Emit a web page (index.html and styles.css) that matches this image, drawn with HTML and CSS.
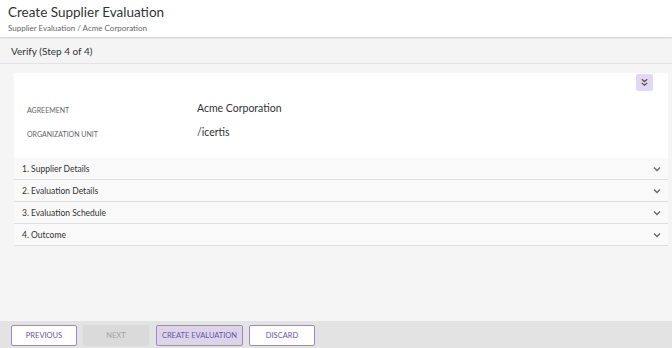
FILE: index.html
```html
<!DOCTYPE html>
<html lang="en">

<head>
  <meta charset="UTF-8">
  <meta name="viewport" content="width=device-width, initial-scale=1.0">
  <title>Create Supplier Evaluation</title>
  <link rel="stylesheet" href="styles.css">
</head>

<body>
  <div class="page">
    <!-- header -->
    <div class="header">
      <div class="title">Create Supplier Evaluation</div>
      <div class="crumbs">Supplier Evaluation / Acme Corporation</div>
    </div>
    <div class="step">Verify (Step 4 of 4)</div>

    <!-- main -->
    <div class="main">
      <div class="card">
        <div class="card-top">
          <button class="btn-expand" title="Expand all">
            <svg width="9" height="9" viewBox="0 0 10 10">
              <path d="M2 1.5 L5 4 L8 1.5 M2 5.5 L5 8 L8 5.5" fill="none" stroke="#555" stroke-width="1.4" />
            </svg>
          </button>
        </div>
        <div class="field">
          <span class="label">Agreement</span>
          <span class="value">Acme Corporation</span>
        </div>
        <div class="field">
          <span class="label">Organization Unit</span>
          <span class="value">/icertis</span>
        </div>
      </div>
      <div class="section">
        <span>1. Supplier Details</span>
        <svg class="chev" width="8" height="6" viewBox="0 0 8 6"><path d="M1 1.5 L4 4.5 L7 1.5" fill="none" stroke="#666" stroke-width="1.3" /></svg>
      </div>
      <div class="section">
        <span>2. Evaluation Details</span>
        <svg class="chev" width="8" height="6" viewBox="0 0 8 6"><path d="M1 1.5 L4 4.5 L7 1.5" fill="none" stroke="#666" stroke-width="1.3" /></svg>
      </div>
      <div class="section">
        <span>3. Evaluation Schedule</span>
        <svg class="chev" width="8" height="6" viewBox="0 0 8 6"><path d="M1 1.5 L4 4.5 L7 1.5" fill="none" stroke="#666" stroke-width="1.3" /></svg>
      </div>
      <div class="section">
        <span>4. Outcome</span>
        <svg class="chev" width="8" height="6" viewBox="0 0 8 6"><path d="M1 1.5 L4 4.5 L7 1.5" fill="none" stroke="#666" stroke-width="1.3" /></svg>
      </div>
    </div>

    <!-- footer -->
    <div class="footer">
      <button class="btn">Previous</button>
      <button class="btn btn-off" disabled>Next</button>
      <button class="btn btn-main">Create Evaluation</button>
      <button class="btn">Discard</button>
    </div>
  </div>
</body>

</html>
```

FILE: styles.css
```css
/* reset start */
html,
body {
  margin: 0;
  padding: 0;
}

body {
  font-family: "Lato", "Liberation Sans", sans-serif;
  color: #333;
}

button {
  font-family: inherit;
}

/* reset end */

.page {
  display: flex;
  flex-direction: column;
  width: 672px;
  height: 348px;
  background: #f5f5f5;
}

/* header start */
.header {
  height: 38px;
  padding: 4px 0 0 8px;
  box-sizing: border-box;
  background: #ffffff;
  border-bottom: 1px solid #d8d8d8;
  box-shadow: 0 1px 2px rgba(0, 0, 0, 0.08);
}

.header .title {
  font-size: 13.5px;
  line-height: 16px;
  color: #333;
}

.header .crumbs {
  margin-top: 3px;
  font-size: 8px;
  color: #666;
}

.step {
  height: 24px;
  line-height: 24px;
  padding-left: 11px;
  margin-top: 1px;
  font-size: 10px;
  color: #333;
  background: #f4f4f4;
  border-bottom: 1px solid #e4e4e4;
}

/* header end */

/* main start */
.main {
  flex: 1;
  padding: 9px 4px 0 14px;
}

.card {
  background: #ffffff;
  padding: 1px 15px 14px 13px;
}

.card-top {
  display: flex;
  justify-content: flex-end;
  height: 22px;
}

.btn-expand {
  width: 17px;
  height: 17px;
  padding: 0;
  border: none;
  border-radius: 2px;
  background: #e2d8f4;
  display: flex;
  align-items: center;
  justify-content: center;
}

.field {
  display: flex;
  align-items: center;
  height: 24px;
}

.field .label {
  width: 170px;
  font-size: 7px;
  text-transform: uppercase;
  color: #666;
  padding-top: 3px;
}

.field .value {
  font-size: 10.5px;
  color: #333;
}

.section {
  display: flex;
  justify-content: space-between;
  align-items: center;
  height: 21px;
  padding: 0 8px;
  background: #f9f9f9;
  border-bottom: 1px solid #dedede;
  font-size: 8.5px;
  color: #333;
}

.section .chev {
  margin-right: -1px;
}

/* main end */

/* footer start */
.footer {
  display: flex;
  gap: 6px;
  height: 27px;
  padding: 4px 11px 0;
  box-sizing: border-box;
  background: #e3e3e3;
}

.footer .btn {
  width: 66px;
  height: 21px;
  padding: 0;
  border: 1px solid #9d85cf;
  border-radius: 2px;
  background: #ffffff;
  color: #6b54a3;
  font-size: 7.5px;
  text-transform: uppercase;
}

.footer .btn-off {
  border-color: #dadada;
  background: #dadada;
  color: #a5a5a5;
}

.footer .btn-main {
  width: 87px;
  margin-left: 1px;
  background: #ddd4ea;
}

/* footer end */
```
